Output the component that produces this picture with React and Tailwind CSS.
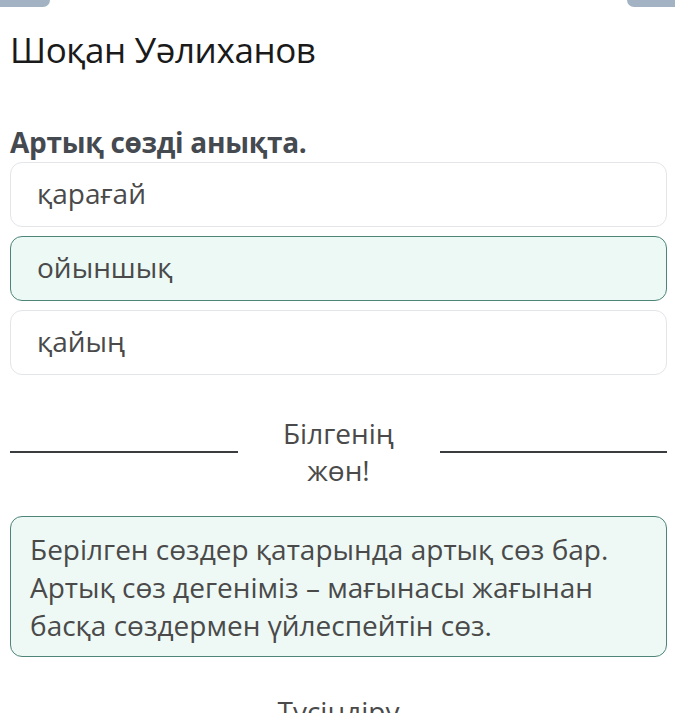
import React from 'react'

const options = [
    { text: 'қарағай', picked: false },
    { text: 'ойыншық', picked: true },
    { text: 'қайың', picked: false },
]

const App = () => {
    return (
        <div className="w-[675px] h-[713px] overflow-hidden bg-white relative" style={{ fontFamily: '"Open Sans", "Noto Sans", sans-serif' }}>
            {/* cut-off buttons at the top */}
            <div className="flex justify-between">
                <div className="w-[50px] h-[7px] bg-[#a3b3c4] rounded-br-[8px]"></div>
                <div className="w-[48px] h-[7px] bg-[#a3b3c4] rounded-bl-[8px]"></div>
            </div>

            <div className="pl-[10px] pr-[8px]">
                <h1 className="mt-[21px] text-[35px] leading-[44px] text-[#1a1a1a] tracking-[-0.4px]">Шоқан Уәлиханов</h1>

                <h2 className="mt-[52px] text-[28px] leading-[36px] font-bold text-[#454950] tracking-[-0.3px]">Артық сөзді анықта.</h2>

                <div className="mt-[2px] flex flex-col gap-[9px]">
                    {options.map((o) => (
                        <div
                            key={o.text}
                            className={`h-[65px] rounded-[12px] border flex items-center pl-[26px] text-[28px] text-[#4a4a4a] ${o.picked ? 'bg-[#edf9f5] border-[#4f8479]' : 'bg-white border-[#e3e5e8]'}`}
                        >
                            <span className="-mt-[4px]">{o.text}</span>
                        </div>
                    ))}
                </div>

                {/* divider */}
                <div className="mt-[40px] flex items-center">
                    <div className="flex-1 h-[2px] bg-[#3a3d3f]"></div>
                    <div className="w-[202px] text-center text-[28px] leading-[37px] text-[#4a4a4a]">Білгенің<br />жөн!</div>
                    <div className="flex-1 h-[2px] bg-[#3a3d3f]"></div>
                </div>

                <div className="mt-[27px] rounded-[12px] border border-[#4f8479] bg-[#eef9f5] pl-[19px] pr-[20px] pt-[13px] pb-[12px] text-[28px] leading-[38px] text-[#4a4a4a]">
                    Берілген сөздер қатарында артық сөз бар. Артық сөз дегеніміз – мағынасы жағынан басқа сөздермен үйлеспейтін сөз.
                </div>

                <div className="mt-[36px] text-center text-[28px] leading-[37px] text-[#4a4a4a]">Түсіндіру</div>
            </div>
        </div>
    )
}

export default App
